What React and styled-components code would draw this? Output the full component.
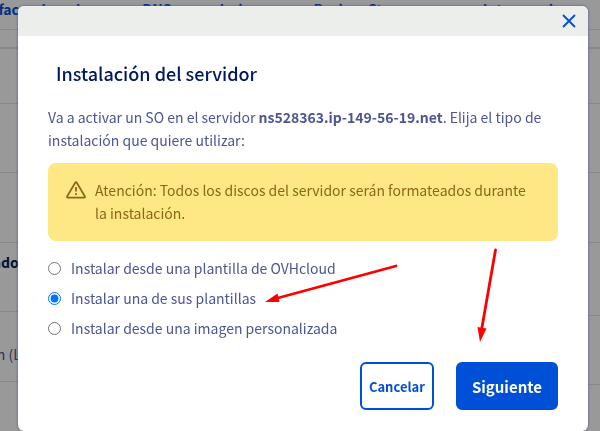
import { useState } from 'react'
import styled, { createGlobalStyle } from 'styled-components'

const colors = {
  blue: '#0050d7',
  navy: '#00185e',
  text: '#4d5592',
  warning: '#fde885',
  warningText: '#8d6618',
  line: '#e2e2ea',
  arrow: '#ff0000'
}

const GlobalStyle = createGlobalStyle`
  * {
    box-sizing: border-box;
  }

  body {
    margin: 0;
    overflow: hidden;
    background: #ffffff;
    color: ${colors.text};
    font-family: 'Noto Sans CJK SC', 'Noto Sans', sans-serif;
    font-size: 14px;
    line-height: 23px;
  }

  button {
    font-family: inherit;
    cursor: pointer;
  }
`

const Page = styled.div`
  min-height: 100vh;
  overflow: hidden;
`

const Tabs = styled.nav`
  display: flex;
  gap: 62px;
  height: 30px;
  margin-left: -35px;
  padding-bottom: 12px;
  align-items: center;
  border-bottom: 1px solid #d5e8f5;
  white-space: nowrap;
`

const Tab = styled.a`
  color: ${colors.blue};
  font-weight: bold;
  line-height: 16px;
  text-decoration: none;
`

const Columns = styled.div`
  display: grid;
  grid-template-columns: 1fr 1fr;
  margin-top: 17px;
  border-top: 2px solid ${colors.line};
`

const InfoRow = styled.div`
  height: ${(props) => props.$height}px;
  border-bottom: 1px solid ${colors.line};
  display: flex;
  flex-direction: column;
  padding-top: 8px;
  white-space: nowrap;
`

const Term = styled.div`
  color: ${colors.navy};
  font-weight: bold;
  margin-left: -28px;
`

const Detail = styled.div`
  margin-left: -41px;
  padding-top: 23px;
`

const Backdrop = styled.div`
  position: fixed;
  inset: 0;
  padding: 6px 12px 0 18px;
  background: rgba(0, 0, 0, 0.4);
`

const Dialog = styled.section`
  position: relative;
  background: #ffffff;
  border-radius: 6px;
  box-shadow: 0 0 2px 1px rgba(77, 85, 146, 0.5);
`

const DialogHeader = styled.header`
  display: flex;
  justify-content: flex-end;
  align-items: center;
  height: 30px;
  padding-right: 12px;
  background: #ebeeeb;
  border-radius: 6px 6px 0 0;
`

const CloseButton = styled.button`
  display: flex;
  padding: 0;
  border: 0;
  background: none;
  color: ${colors.blue};
`

const DialogBody = styled.div`
  padding: 24px 30px 21px;
`

const Title = styled.h1`
  margin: 0 0 20px;
  padding-left: 8px;
  color: ${colors.navy};
  font-size: 18px;
  font-weight: 500;
  line-height: 26px;
`

const Intro = styled.p`
  margin: 0;
`

const Warning = styled.div`
  display: flex;
  gap: 9px;
  margin: 11px 0 16px;
  padding: 16px 18px;
  background: ${colors.warning};
  border-radius: 8px;
  color: ${colors.warningText};

  > svg {
    flex: none;
    margin-top: 2px;
  }

  > p {
    margin: 0;
  }
`

const Options = styled.fieldset`
  display: flex;
  flex-direction: column;
  gap: 7px;
  margin: 0;
  padding: 0;
  border: 0;
`

const Option = styled.label`
  display: flex;
  align-items: center;
  gap: 10px;

  > input {
    width: 13px;
    height: 13px;
    margin: 0;
  }
`

const Actions = styled.footer`
  display: flex;
  justify-content: flex-end;
  gap: 22px;
  margin-top: 22px;
`

const Button = styled.button`
  height: 48px;
  padding: ${(props) => (props.$primary ? '0 14px' : '0 7px')};
  border: 2px solid ${colors.blue};
  border-radius: 6px;
  background: ${(props) => (props.$primary ? colors.blue : '#ffffff')};
  color: ${(props) => (props.$primary ? '#ffffff' : colors.blue)};
  font-size: ${(props) => (props.$primary ? 15 : 13)}px;
  font-weight: bold;
`

const Arrows = styled.svg`
  position: absolute;
  top: 0;
  left: 0;
  pointer-events: none;
`

const tabs = [
  'Interfaces de red',
  'DNS secundario',
  'Backup Storage',
  'Intervenciones'
]

const options = [
  { id: 'ovh', label: 'Instalar desde una plantilla de OVHcloud' },
  { id: 'own', label: 'Instalar una de sus plantillas' },
  { id: 'custom', label: 'Instalar desde una imagen personalizada' }
]

const WarningIcon = () => (
  <svg width='20' height='18' viewBox='0 0 20 18' fill='none' stroke='currentColor'>
    <path
      d='M9.2 1.7 1.2 15.2Q.6 16.7 2 16.7H18Q19.4 16.7 18.8 15.2L10.8 1.7Q10 .5 9.2 1.7Z'
      strokeWidth='1.7'
      strokeLinejoin='round'
    />
    <path d='M10 6v4.5M10 12.2v1.8' strokeWidth='1.8' />
  </svg>
)

const App = () => {
  const [selected, setSelected] = useState('own')

  return (
    <>
      <GlobalStyle />
      <Page>
        <Tabs>
          {tabs.map((tab) => (
            <Tab key={tab} href='#'>
              {tab}
            </Tab>
          ))}
        </Tabs>
        <Columns>
          <div>
            <InfoRow $height={55} />
            <InfoRow $height={69} />
            <InfoRow $height={70} />
            <InfoRow $height={69}>
              <Term>Estado</Term>
            </InfoRow>
            <InfoRow $height={70}>
              <Detail>Debian (Linux)</Detail>
            </InfoRow>
          </div>
          <div>
            <InfoRow $height={55} />
            <InfoRow $height={69} />
            <InfoRow $height={70} />
            <InfoRow $height={73} />
            <InfoRow $height={69} />
          </div>
        </Columns>
      </Page>
      <Backdrop>
        <Dialog role='dialog' aria-labelledby='dialog-title'>
          <DialogHeader>
            <CloseButton aria-label='Cerrar'>
              <svg width='14' height='14' viewBox='0 0 14 14' stroke='currentColor' strokeWidth='1.8'>
                <path d='M1 1l12 12M13 1L1 13' />
              </svg>
            </CloseButton>
          </DialogHeader>
          <DialogBody>
            <Title id='dialog-title'>Instalación del servidor</Title>
            <Intro>
              Va a activar un SO en el servidor{' '}
              <b>ns528363.ip-149-56-19.net</b>. Elija el tipo de instalación que
              quiere utilizar:
            </Intro>
            <Warning>
              <WarningIcon />
              <p>
                Atención: Todos los discos del servidor serán formateados durante
                la instalación.
              </p>
            </Warning>
            <Options aria-label='Tipo de instalación'>
              {options.map((option) => (
                <Option key={option.id}>
                  <input
                    type='radio'
                    name='install'
                    checked={selected === option.id}
                    onChange={() => setSelected(option.id)}
                  />
                  {option.label}
                </Option>
              ))}
            </Options>
            <Actions>
              <Button>Cancelar</Button>
              <Button $primary>Siguiente</Button>
            </Actions>
          </DialogBody>
          <Arrows width='570' height='425' viewBox='0 0 570 425' fill={colors.arrow}>
            <g stroke={colors.arrow} strokeWidth='2.8' strokeLinecap='round'>
              <path d='M378 260L258 292.5' />
              <path d='M477.5 244L463.5 324' />
            </g>
            <path d='M247 296L259.5 287.5L261.5 296Z' />
            <path d='M462 336L459.5 321L468.5 322.5Z' />
          </Arrows>
        </Dialog>
      </Backdrop>
    </>
  )
}

export default App
